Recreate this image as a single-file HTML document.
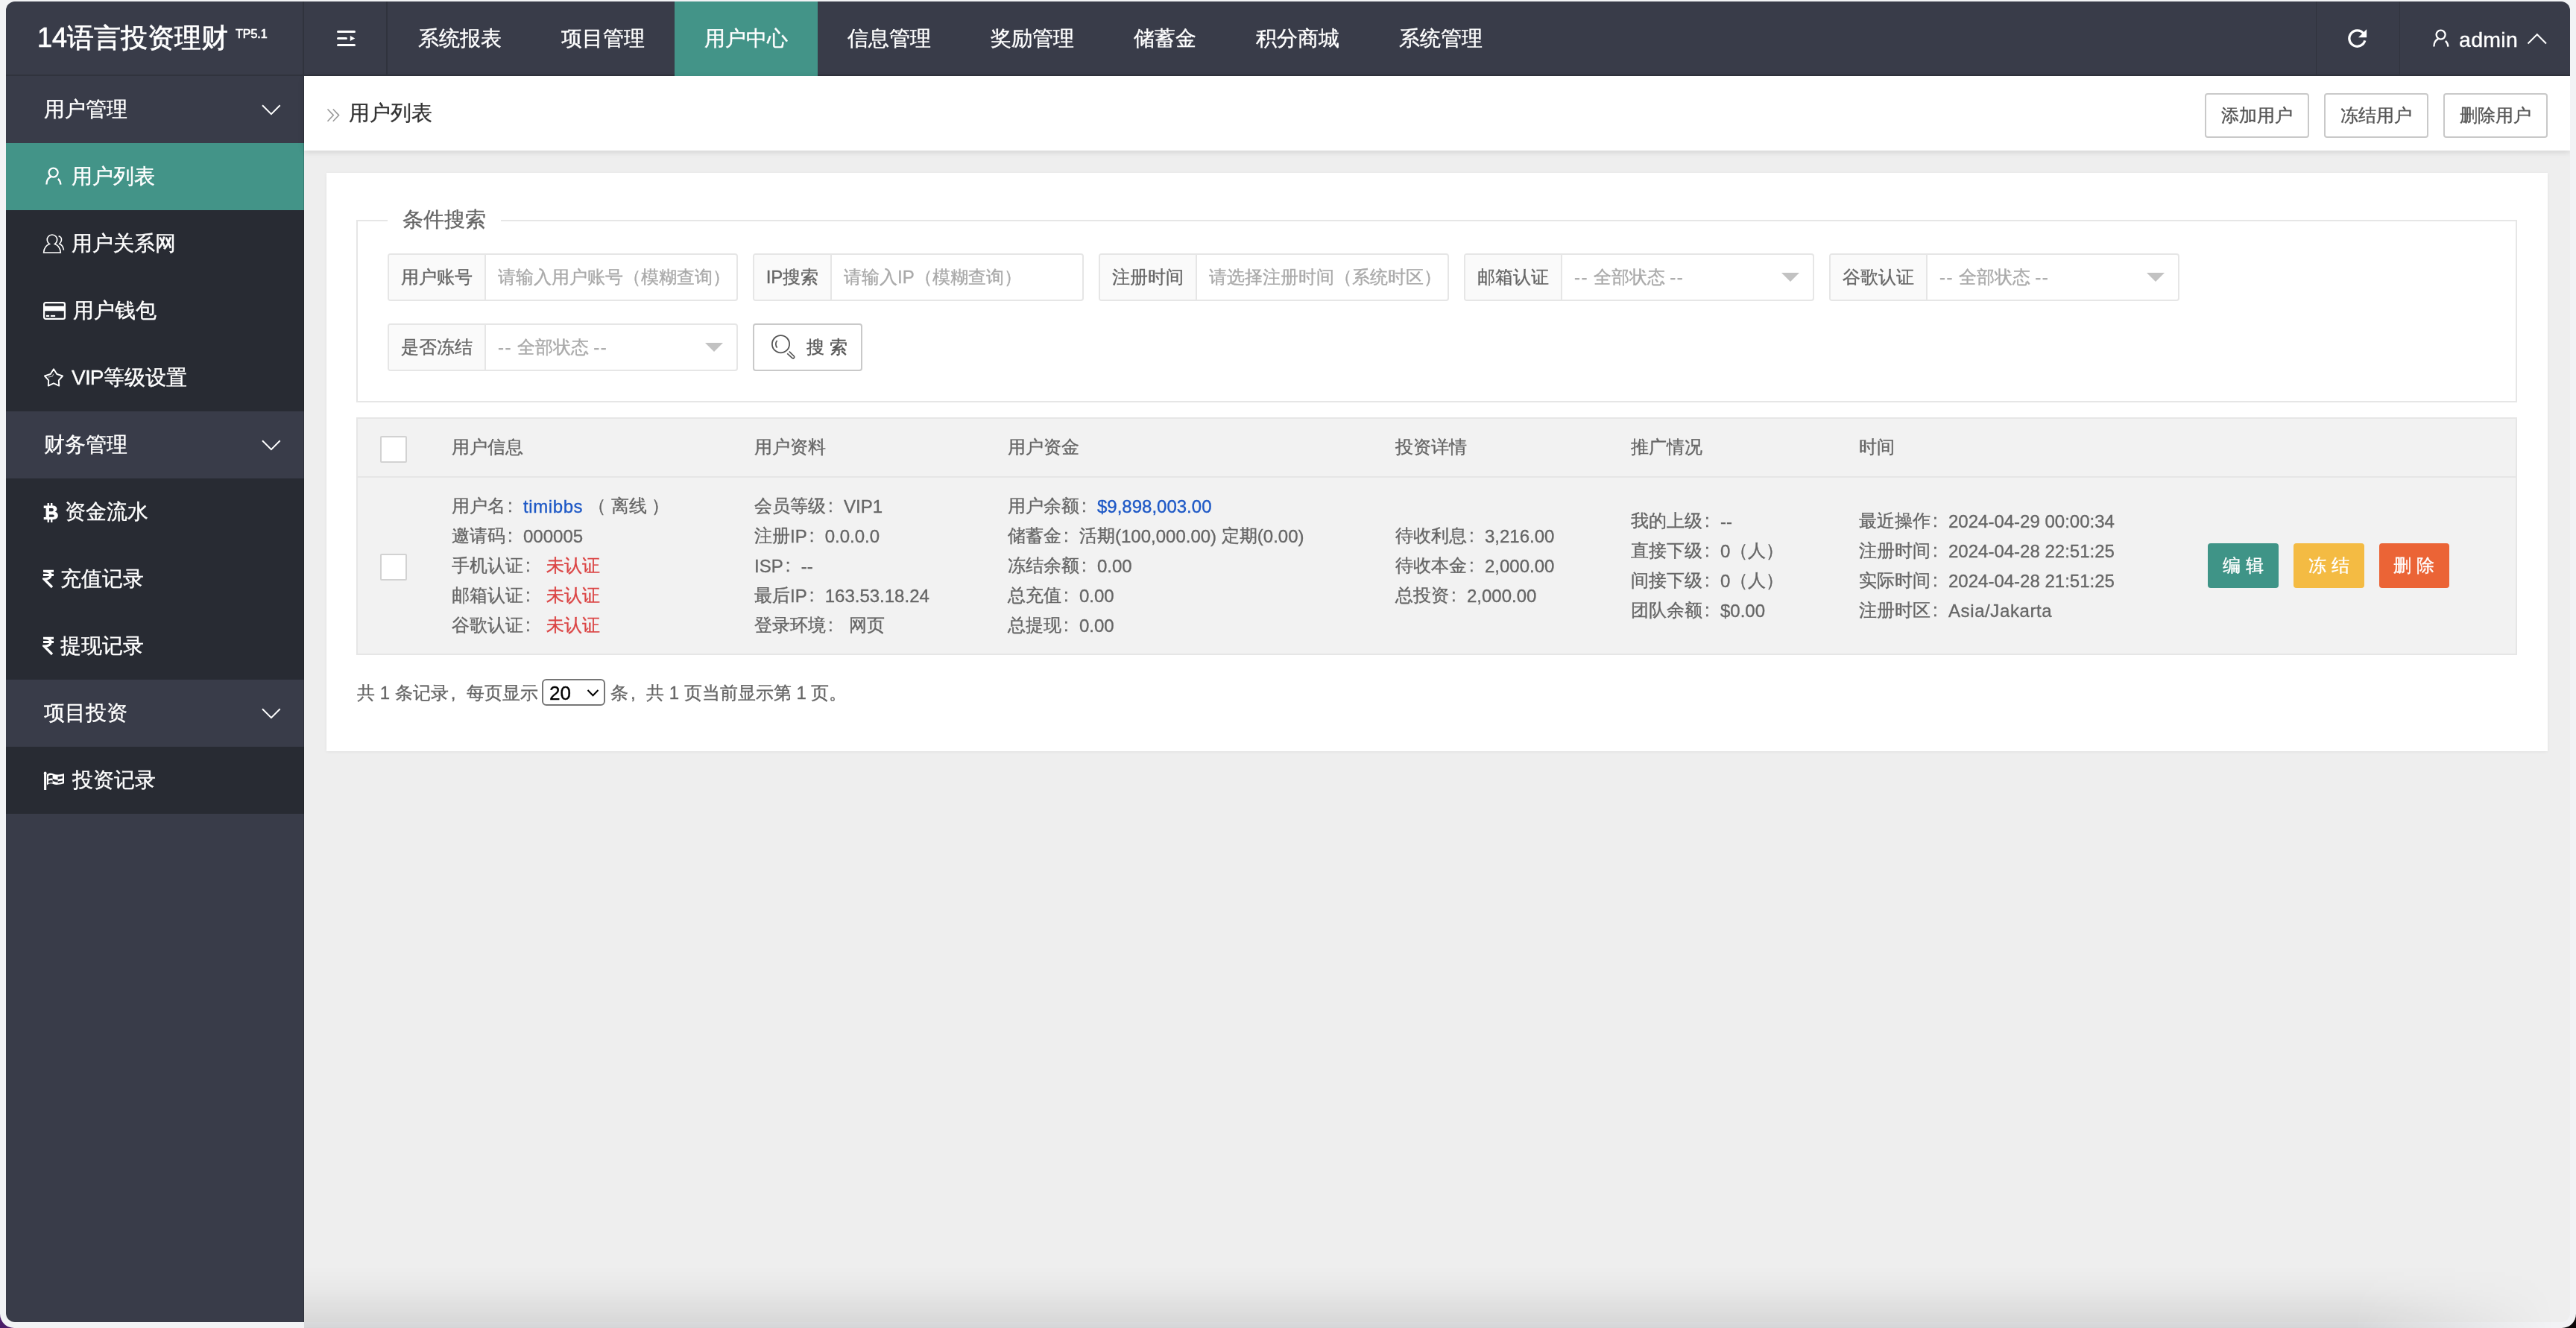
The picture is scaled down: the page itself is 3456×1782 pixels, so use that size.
<!DOCTYPE html>
<html><head><meta charset="utf-8">
<style>
*{box-sizing:border-box;margin:0;padding:0}
html,body{width:3456px;height:1782px;overflow:hidden}
body{background:linear-gradient(to right,#4a1c68 0,#4a1c68 50%,#0b0709 50%,#0b0709 100%);font-family:"Liberation Sans",sans-serif;position:relative}
#page *{-webkit-text-stroke:0.35px currentColor}
.logo,.logo *{-webkit-text-stroke:0.7px #fff !important}
.abs{position:absolute}
#frame{position:absolute;left:0;top:0;width:3456px;height:1782px;background:#f2f3f5;border-radius:0 0 19px 19px}
#page{position:absolute;left:8px;top:2px;width:3440px;height:1772px;border-radius:12px;overflow:hidden;background:#eeeeee;will-change:transform}
/* header */
#hd{position:absolute;left:0;top:0;width:3440px;height:100px;background:#393c49;border-bottom:2px solid #30333d}
.logo{position:absolute;left:42px;top:29px;color:#fff;font-size:36px;line-height:40px;white-space:nowrap}
.logo sup{font-size:16px;position:absolute;left:266px;top:5px;line-height:20px}
.vsep{position:absolute;top:0;width:2px;height:100px;background:#30333d}
.nav{position:absolute;top:0;height:98px;line-height:100px;color:#fff;font-size:28px;text-align:center;white-space:nowrap}
.nav.on{background:#439488;height:100px}
/* sidebar */
#side{position:absolute;left:0;top:100px;width:400px;height:1672px;background:#393c49}
#sideln{position:absolute;left:399px;top:100px;width:1px;height:1672px;background:rgba(0,0,0,.18)}
.row{position:absolute;left:0;width:400px;height:90px;line-height:90px;color:#fff;font-size:28px;white-space:nowrap}
.grp{background:#393c49}
.chd{background:#282b33}
.chd.on{background:#439488}
.grp .t{position:absolute;left:51px}
.chd .t{position:absolute;left:89px}
/* breadcrumb */
#bc{position:absolute;left:400px;top:100px;width:3040px;height:100px;background:#fff;box-shadow:0 2px 8px rgba(0,0,0,.12)}
.btn{position:absolute;top:23px;height:60px;width:140px;border:2px solid #c9c9c9;border-radius:4px;background:#fff;color:#555;font-size:24px;line-height:56px;text-align:center;white-space:nowrap}
/* card */
#card{position:absolute;left:430px;top:230px;width:2980px;height:776px;background:#fff;box-shadow:0 1px 4px rgba(0,0,0,.06)}
.txt{position:absolute;white-space:nowrap;font-size:24px;color:#666;line-height:40px}

.fs{position:absolute;left:40px;top:63px;width:2899px;height:245px;border:2px solid #e6e6e6;border-radius:0}
.legend{position:absolute;left:82px;top:43px;width:152px;height:40px;background:#fff;color:#666;font-size:28px;line-height:40px;text-align:center;white-space:nowrap}
.fi{position:absolute;height:63.6px;border:2px solid #e6e6e6;border-radius:4px;background:#fff;overflow:hidden}
.fl{position:absolute;left:0;top:0;height:59.6px;background:#fafafa;border-right:2px solid #e6e6e6;color:#666;font-size:24px;line-height:60px;text-align:center;white-space:nowrap}
.ph{position:absolute;top:0;height:59.6px;color:#aaa;font-size:24px;line-height:60px;white-space:nowrap}
.tri{position:absolute;top:24px;width:0;height:0;border-left:12px solid transparent;border-right:12px solid transparent;border-top:12px solid #c2c2c2}
.tbl{position:absolute;left:40px;top:328px;width:2899px;height:319px;border:2px solid #e6e6e6;background:#f2f2f2}
.thb{position:absolute;left:0;top:77px;width:2895px;height:2px;background:#e6e6e6}
.cb{position:absolute;width:36px;height:36px;border:2px solid #d2d2d2;border-radius:2px;background:#fff}
.c{position:absolute;white-space:nowrap;font-size:24px;color:#666;line-height:40px}
.blue{color:#1d58c6}
.red{color:#db4545}
.ab{position:absolute;top:167px;width:94.5px;height:60px;border-radius:4px;color:#fff;font-size:24px;line-height:60px;text-align:center;white-space:nowrap}
.hy{letter-spacing:1.5px}
.k{display:inline-block;width:24px;font-style:normal;text-indent:3px}
.lt{letter-spacing:0.6px}
.n{font-weight:normal;position:relative;top:1px}
</style></head><body>
<div id="frame"></div>
<div id="page">
  <div id="hd">
    <div class="logo">14语言投资理财<sup>TP5.1</sup></div>
    <div class="vsep" style="left:398px"></div>
    <div class="vsep" style="left:510px"></div>
    <!-- toggle icon -->
    <svg class="abs" style="left:443px;top:38px" width="28" height="26" viewBox="0 0 28 26">
      <rect x="1" y="1" width="25" height="3" rx="1.5" fill="#fff"/>
      <rect x="1" y="10" width="14" height="3" rx="1.5" fill="#fff"/>
      <path d="M18.8 8 L25.3 11.5 L18.8 15 Z" fill="#fff"/>
      <rect x="1" y="19" width="25" height="3" rx="1.5" fill="#fff"/>
    </svg>
    <div class="nav" style="left:513px;width:192px">系统报表</div>
    <div class="nav" style="left:705px;width:192px">项目管理</div>
    <div class="nav on" style="left:897px;width:192px">用户中心</div>
    <div class="nav" style="left:1089px;width:192px">信息管理</div>
    <div class="nav" style="left:1281px;width:192px">奖励管理</div>
    <div class="nav" style="left:1473px;width:164px">储蓄金</div>
    <div class="nav" style="left:1637px;width:192px">积分商城</div>
    <div class="nav" style="left:1829px;width:192px">系统管理</div>
    <div class="vsep" style="left:3099px;width:1px"></div>
    <div class="vsep" style="left:3211px;width:1px"></div>

    <!-- refresh icon -->
    <svg class="abs" style="left:3140px;top:36px" width="30" height="30" viewBox="0 0 30 30">
      <path d="M22.66 6.75 A10.65 10.65 0 1 0 24.8 16.4" fill="none" stroke="#fff" stroke-width="3.3"/>
      <path d="M27.1 1.2 L27.1 12.3 L16 12.3 Z" fill="#fff"/>
    </svg>
    <!-- user icon -->
    <svg class="abs" style="left:3252px;top:34px" width="30" height="30" viewBox="0 0 30 30">
      <circle cx="14.6" cy="10.6" r="6" fill="none" stroke="#fff" stroke-width="2.3"/>
      <path d="M11.2 16.4 C7.2 17.8 5.4 22 5.4 26.6" fill="none" stroke="#fff" stroke-width="2.3"/>
      <path d="M20.9 18.8 C23 20.8 24.2 23.5 24.4 26.6" fill="none" stroke="#fff" stroke-width="2.3"/>
    </svg>
    <div class="abs" style="left:3291px;top:31px;color:#fff;font-size:28.5px;line-height:40px;letter-spacing:0.3px">admin</div>
    <svg class="abs" style="left:3382px;top:41px" width="28" height="18" viewBox="0 0 28 18">
      <path d="M1.5 15.5 L13.8 3.2 L26 15.5" fill="none" stroke="#fff" stroke-width="2"/>
    </svg>
  </div>

  <div id="side">
    <div class="row grp" style="top:0"><span class="t">用户管理</span>
      <svg class="abs" style="left:342px;top:37px" width="28" height="17" viewBox="0 0 28 17"><path d="M2 2.3 L13.9 14.1 L25.7 2.3" fill="none" stroke="#fff" stroke-width="2"/></svg></div>
    <div class="row chd on" style="top:90px">
      <svg class="abs" style="left:49px;top:29px" width="30" height="30" viewBox="0 0 30 30"><circle cx="14.6" cy="10.6" r="6" fill="none" stroke="#fff" stroke-width="2.3"/><path d="M11.2 16.4 C7.2 17.8 5.4 22 5.4 26.6" fill="none" stroke="#fff" stroke-width="2.3"/><path d="M20.9 18.8 C23 20.8 24.2 23.5 24.4 26.6" fill="none" stroke="#fff" stroke-width="2.3"/></svg>
      <span class="t" style="left:88px">用户列表</span></div>
    <div class="row chd" style="top:180px">
      <svg class="abs" style="left:48px;top:28px" width="32" height="32" viewBox="0 0 32 32"><path d="M10.4 17.4 A6.7 6.7 0 1 1 17.5 17.4 C22 19 25 23 25.3 29 L2.6 29 C3 23 6 19 10.4 17.4 Z" fill="none" stroke="#fff" stroke-width="1.6" stroke-linejoin="miter"/><path d="M22.6 6.7 C25.5 7.5 26.8 10 26.4 12.5 C26 14.5 25 16 23.8 17.2 C27 18.5 29 22 29.5 25.7" fill="none" stroke="#fff" stroke-width="1.6"/></svg>
      <span class="t" style="left:88px">用户关系网</span></div>
    <div class="row chd" style="top:270px">
      <svg class="abs" style="left:48px;top:30px" width="34" height="30" viewBox="0 0 34 30"><rect x="3.1" y="4.1" width="27.8" height="21.8" rx="2.2" fill="none" stroke="#fff" stroke-width="2.2"/><rect x="3" y="8.8" width="28" height="6.5" fill="#fff"/><rect x="5.9" y="20.9" width="4.2" height="2.1" fill="#fff"/><rect x="11.9" y="20.9" width="6.2" height="2.1" fill="#fff"/></svg>
      <span class="t" style="left:90px">用户钱包</span></div>
    <div class="row chd" style="top:360px">
      <svg class="abs" style="left:48px;top:28px" width="32" height="32" viewBox="0 0 32 32"><path d="M16 5.3 L20.3 12 L28 14.5 L22.8 20.3 L23.2 27.6 L16 24.3 L8.8 27.6 L9.2 20.3 L4 14.5 L11.7 12 Z" fill="none" stroke="#fff" stroke-width="1.9" stroke-linejoin="round"/><path d="M15.6 11.8 L14.5 15 L8.6 16.1" fill="none" stroke="#fff" stroke-width="0.9" opacity=".8"/></svg>
      <span class="t" style="left:88px"><span style="letter-spacing:-0.8px">VIP</span>等级设置</span></div>
    <div class="row grp" style="top:450px"><span class="t">财务管理</span>
      <svg class="abs" style="left:342px;top:37px" width="28" height="17" viewBox="0 0 28 17"><path d="M2 2.3 L13.9 14.1 L25.7 2.3" fill="none" stroke="#fff" stroke-width="2"/></svg></div>
    <div class="row chd" style="top:540px">
      <svg class="abs" style="left:48px;top:30px" width="26" height="32" viewBox="0 0 26 32"><path fill="#fff" fill-rule="evenodd" d="M7.6 2.9 H9.9 V6.6 H7.6 Z M12 2.9 H14.4 V6.6 H12 Z M7.6 25.2 H9.9 V28.9 H7.6 Z M12 25.2 H14.4 V28.9 H12 Z M2.7 6.6 H14.5 C18.5 6.6 20.4 8.6 20.4 11 C20.4 12.8 19.3 14.2 17.6 14.7 C20.2 15.2 21.8 17 21.8 19.6 C21.8 22.8 19.5 25.2 15 25.2 H2.7 V21.9 H5.6 V9.9 H2.7 Z M9.9 9.9 H14 C15.2 9.9 15.8 10.8 15.8 12 C15.8 13.2 15.2 14.2 14 14.2 H9.9 Z M9.9 18.4 H15 C16.2 18.4 16.8 19.3 16.8 20.3 C16.8 21.3 16.2 21.7 15 21.7 H9.9 Z"/></svg>
      <span class="t" style="left:79px">资金流水</span></div>
    <div class="row chd" style="top:630px">
      <svg class="abs" style="left:49px;top:32px" width="18" height="26" viewBox="0 0 18 26"><path d="M1 2.3 L15 2.3 M1 7.5 L15 7.5" stroke="#fff" stroke-width="3"/><path d="M1.5 2.5 C8 2.5 11 4.5 11 7.5 C11 11 7.5 13 2 13 L13 24" fill="none" stroke="#fff" stroke-width="3.2"/></svg>
      <span class="t" style="left:73px">充值记录</span></div>
    <div class="row chd" style="top:720px">
      <svg class="abs" style="left:49px;top:32px" width="18" height="26" viewBox="0 0 18 26"><path d="M1 2.3 L15 2.3 M1 7.5 L15 7.5" stroke="#fff" stroke-width="3"/><path d="M1.5 2.5 C8 2.5 11 4.5 11 7.5 C11 11 7.5 13 2 13 L13 24" fill="none" stroke="#fff" stroke-width="3.2"/></svg>
      <span class="t" style="left:73px">提现记录</span></div>
    <div class="row grp" style="top:810px"><span class="t">项目投资</span>
      <svg class="abs" style="left:342px;top:37px" width="28" height="17" viewBox="0 0 28 17"><path d="M2 2.3 L13.9 14.1 L25.7 2.3" fill="none" stroke="#fff" stroke-width="2"/></svg></div>
    <div class="row chd" style="top:900px">
      <svg class="abs" style="left:48px;top:31px" width="32" height="30" viewBox="0 0 32 30"><rect x="3.1" y="4" width="3.1" height="23" fill="#fff"/><circle cx="4.65" cy="4.5" r="1.9" fill="#fff"/><path d="M7 6.2 C10 4 13 4 16 5.6 C19 7.2 23 6.8 30 5 L30 18.3 C23 20 19 20.6 16 19.2 C13 17.8 10 17.6 7 20.5 Z" fill="#fff"/><g fill="#282b33"><path d="M9 8 C11 6.9 13 6.8 14.6 7.3 L14.6 11.9 C12.8 11.4 11 11.5 9 12.4 Z"/><path d="M21.6 9.1 C23.5 9.1 25.5 8.8 27.8 8.2 L27.8 11.6 C25.5 12.1 23.5 12.4 21.6 12.4 Z"/><path d="M14.6 11.9 C17 12.5 19 13.6 21.6 13.4 L21.6 16.4 C19 16.6 17 15.9 14.6 14.9 Z"/><path d="M9 14.6 C11 13.8 12.8 13.8 14.6 14.3 L14.6 17.5 C12.6 17 11 17 9 17.9 Z"/><path d="M21.6 15.4 C23.5 15.3 25.5 15 27.8 14.5 L27.8 16.6 C25.5 17.2 23.5 17.9 21.6 18.1 Z"/></g></svg>
      <span class="t">投资记录</span></div>
  </div>
  <div id="sideln"></div>
  <div id="bc">
    <svg class="abs" style="left:30px;top:43px" width="22" height="20" viewBox="0 0 22 20"><path d="M1.5 1.5 L9.3 9.6 L1.5 17.7 M8.8 1.5 L16.6 9.6 L8.8 17.7" fill="none" stroke="#999" stroke-width="1.6"/></svg>
    <div class="abs" style="left:60px;top:30px;font-size:28px;line-height:40px;color:#333;white-space:nowrap">用户列表</div>
    <div class="btn" style="left:2550px">添加用户</div>
    <div class="btn" style="left:2710px">冻结用户</div>
    <div class="btn" style="left:2870px">删除用户</div>
  </div>
  <div id="card">
    <div class="fs"></div>
    <div class="legend">条件搜索</div>
    <!-- row1 -->
    <div class="fi" style="left:82px;top:108px;width:470px"><div class="fl" style="width:130px">用户账号</div><div class="ph" style="left:146px">请输入用户账号（模糊查询）</div></div>
    <div class="fi" style="left:572px;top:108px;width:444px"><div class="fl" style="width:104px">IP搜索</div><div class="ph" style="left:120px">请输入IP（模糊查询）</div></div>
    <div class="fi" style="left:1036px;top:108px;width:470px"><div class="fl" style="width:130px">注册时间</div><div class="ph" style="left:146px">请选择注册时间（系统时区）</div></div>
    <div class="fi" style="left:1526px;top:108px;width:470px"><div class="fl" style="width:130px">邮箱认证</div><div class="ph" style="left:146px"><span class="hy">--</span> 全部状态 <span class="hy">--</span></div><div class="tri" style="left:424px"></div></div>
    <div class="fi" style="left:2016px;top:108px;width:470px"><div class="fl" style="width:130px">谷歌认证</div><div class="ph" style="left:146px"><span class="hy">--</span> 全部状态 <span class="hy">--</span></div><div class="tri" style="left:424px"></div></div>
    <!-- row2 -->
    <div class="fi" style="left:82px;top:202px;width:470px"><div class="fl" style="width:130px">是否冻结</div><div class="ph" style="left:146px"><span class="hy">--</span> 全部状态 <span class="hy">--</span></div><div class="tri" style="left:424px"></div></div>
    <div class="fi" style="left:572px;top:202px;width:147px;border-color:#c9c9c9">
      <svg class="abs" style="left:18px;top:9px" width="40" height="40" viewBox="0 0 40 40"><circle cx="17.5" cy="16.7" r="11.6" fill="none" stroke="#555" stroke-width="1.8"/><path d="M12.6 12 C10.2 14.5 10.2 19.2 12.6 21.6" fill="none" stroke="#555" stroke-width="1.7"/><path d="M26.2 29.4 L32.8 35.4 C34.3 36.8 36.8 34.5 35.3 33 L28.8 26.6" fill="none" stroke="#555" stroke-width="1.7"/></svg>
      <div class="abs" style="left:70px;top:0;line-height:59px;font-size:24px;color:#555;white-space:nowrap">搜 索</div>
    </div>
    <!-- table -->
    <div class="tbl">
      <div class="thb"></div>
      <div class="cb" style="left:30px;top:23px"></div>
      <div class="c" style="left:126px;top:18px">用户信息</div>
      <div class="c" style="left:532px;top:18px">用户资料</div>
      <div class="c" style="left:872px;top:18px">用户资金</div>
      <div class="c" style="left:1392px;top:18px">投资详情</div>
      <div class="c" style="left:1708px;top:18px">推广情况</div>
      <div class="c" style="left:2014px;top:18px">时间</div>
      <div class="cb" style="left:30px;top:181px"></div>
      <div class="c" style="left:126px;top:97px">用户名<i class="k">:</i><span class="blue lt"><b class="n">timibbs</b></span> （ 离线 ）<br>邀请码<i class="k">:</i><b class="n">000005</b><br>手机认证<i class="k">:</i> <span class="red">未认证</span><br>邮箱认证<i class="k">:</i> <span class="red">未认证</span><br>谷歌认证<i class="k">:</i> <span class="red">未认证</span></div>
      <div class="c" style="left:532px;top:97px">会员等级<i class="k">:</i><b class="n">VIP1</b><br>注册<b class="n">IP</b><i class="k">:</i><b class="n">0.0.0.0</b><br><b class="n">ISP</b><i class="k">:</i><b class="n">--</b><br>最后<b class="n">IP</b><i class="k">:</i><b class="n">163.53.18.24</b><br>登录环境<i class="k">:</i> 网页</div>
      <div class="c" style="left:872px;top:97px">用户余额<i class="k">:</i><span class="blue"><b class="n">$9,898,003.00</b></span><br>储蓄金<i class="k">:</i>活期(<b class="n">100,000.00)</b> 定期(<b class="n">0.00)</b><br>冻结余额<i class="k">:</i><b class="n">0.00</b><br>总充值<i class="k">:</i><b class="n">0.00</b><br>总提现<i class="k">:</i><b class="n">0.00</b></div>
      <div class="c" style="left:1392px;top:137px">待收利息<i class="k">:</i><b class="n">3,216.00</b><br>待收本金<i class="k">:</i><b class="n">2,000.00</b><br>总投资<i class="k">:</i><b class="n">2,000.00</b></div>
      <div class="c" style="left:1708px;top:117px">我的上级<i class="k">:</i><b class="n">--</b><br>直接下级<i class="k">:</i><b class="n">0</b>（人）<br>间接下级<i class="k">:</i><b class="n">0</b>（人）<br>团队余额<i class="k">:</i><b class="n">$0.00</b></div>
      <div class="c" style="left:2014px;top:117px">最近操作<i class="k">:</i><b class="n">2024-04-29 00:00:34</b><br>注册时间<i class="k">:</i><b class="n">2024-04-28 22:51:25</b><br>实际时间<i class="k">:</i><b class="n">2024-04-28 21:51:25</b><br>注册时区<i class="k">:</i><span class="lt"><b class="n">Asia/Jakarta</b></span></div>
      <div class="ab" style="left:2482px;background:#3f9487">编 辑</div>
      <div class="ab" style="left:2597px;background:#f4bb43">冻 结</div>
      <div class="ab" style="left:2711.5px;background:#eb6436">删 除</div>
    </div>
    <!-- pagination -->
    <div class="c" style="left:41px;top:678px;line-height:40px">共 1 条记录<i class="k">,</i>每页显示 <span style="display:inline-block;width:84px;height:36px;vertical-align:middle"></span> 条<i class="k">,</i>共 1 页当前显示第 1 页。</div>
    <div class="abs" style="left:289px;top:679px;width:85px;height:36px;border:2px solid #767676;border-radius:6px;background:#fff">
      <div class="abs" style="left:8px;top:-1px;font-size:26px;line-height:36px;color:#000">20</div>
      <svg class="abs" style="left:57px;top:10px" width="20" height="14" viewBox="0 0 20 14"><path d="M2.5 3 L9.5 10.2 L16.5 3" fill="none" stroke="#000" stroke-width="2"/></svg>
    </div>
  </div>
  <div class="abs" style="left:400px;top:1698px;width:3040px;height:74px;background:linear-gradient(to bottom,rgba(0,0,0,0) 0%,rgba(0,0,0,.025) 40%,rgba(0,0,0,.09) 100%);-webkit-mask-image:linear-gradient(to right,#000 0,#000 2750px,rgba(0,0,0,0) 3020px)"></div>
</div>
<div class="abs" style="left:408px;top:1774px;width:3048px;height:8px;background:linear-gradient(to bottom,rgba(0,0,0,.1),rgba(0,0,0,.12));-webkit-mask-image:linear-gradient(to right,#000 0,#000 2750px,rgba(0,0,0,0) 3020px)"></div>
</body></html>
